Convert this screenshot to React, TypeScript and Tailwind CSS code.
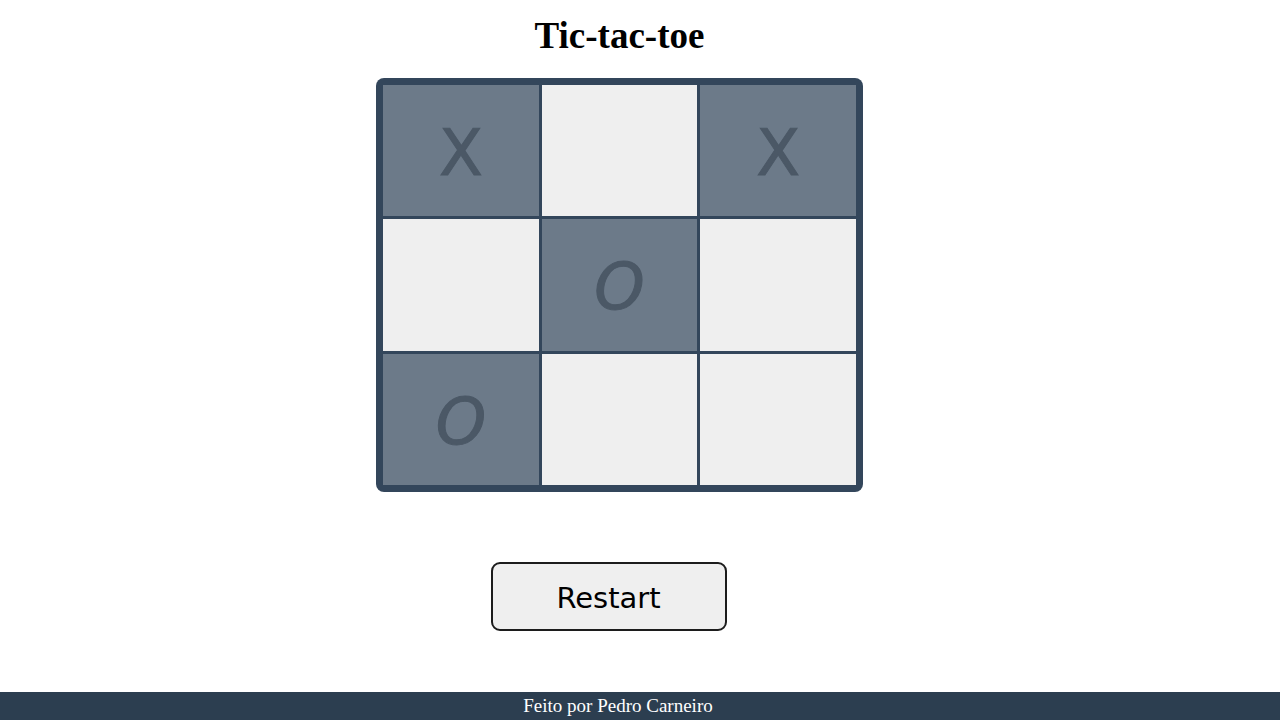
import React from 'react';

type Mark = 'X' | 'O' | null;

const board: Mark[] = ['X', null, 'X', null, 'O', null, 'O', null, null];

// Cell
// ---------------
const Cell = ({ mark }: { mark: Mark }) => (
  <div
    className={
      mark
        ? 'flex items-center justify-center bg-[#6c7a89]'
        : 'flex items-center justify-center bg-[#efefef]'
    }
  >
    {mark && (
      <span
        className={
          mark === 'O'
            ? 'pt-[5px] font-["Comic_Sans_MS","DejaVu_Sans",sans-serif] text-[64px] leading-none text-[#4b5866] italic [-webkit-text-stroke:1px_#4b5866]'
            : 'pt-[5px] font-["Comic_Sans_MS","DejaVu_Sans",sans-serif] text-[64px] leading-none text-[#4b5866] [-webkit-text-stroke:1px_#4b5866]'
        }
      >
        {mark}
      </span>
    )}
  </div>
);

// Component
// ---------------
export default function App() {
  return (
    <div className="flex min-h-screen flex-col bg-white">
      <main className="flex flex-1 flex-col items-center pr-[41px]">
        <h1 className="mt-[15px] font-['Liberation_Serif',serif] text-[37px] leading-[42px] font-bold text-black">
          Tic-tac-toe
        </h1>
        <div className="mt-[21px] grid h-[414px] w-[487px] grid-cols-3 grid-rows-3 gap-[3px] rounded-[8px] bg-[#33465b] p-[7px]">
          {board.map((mark, i) => (
            <Cell key={i} mark={mark} />
          ))}
        </div>
        <button className="mt-[70px] mr-[22px] h-[69px] w-[236px] rounded-[9px] border-2 border-[#1c1c1c] bg-[#efefef] pt-[4px] font-['Comic_Sans_MS','DejaVu_Sans',sans-serif] text-[29px] text-black">
          Restart
        </button>
      </main>
      <footer className="flex h-[28px] items-center justify-center bg-[#2c3e50] pr-[44px] font-['Liberation_Serif',serif] text-[19px] text-white">
        Feito por Pedro Carneiro
      </footer>
    </div>
  );
}
